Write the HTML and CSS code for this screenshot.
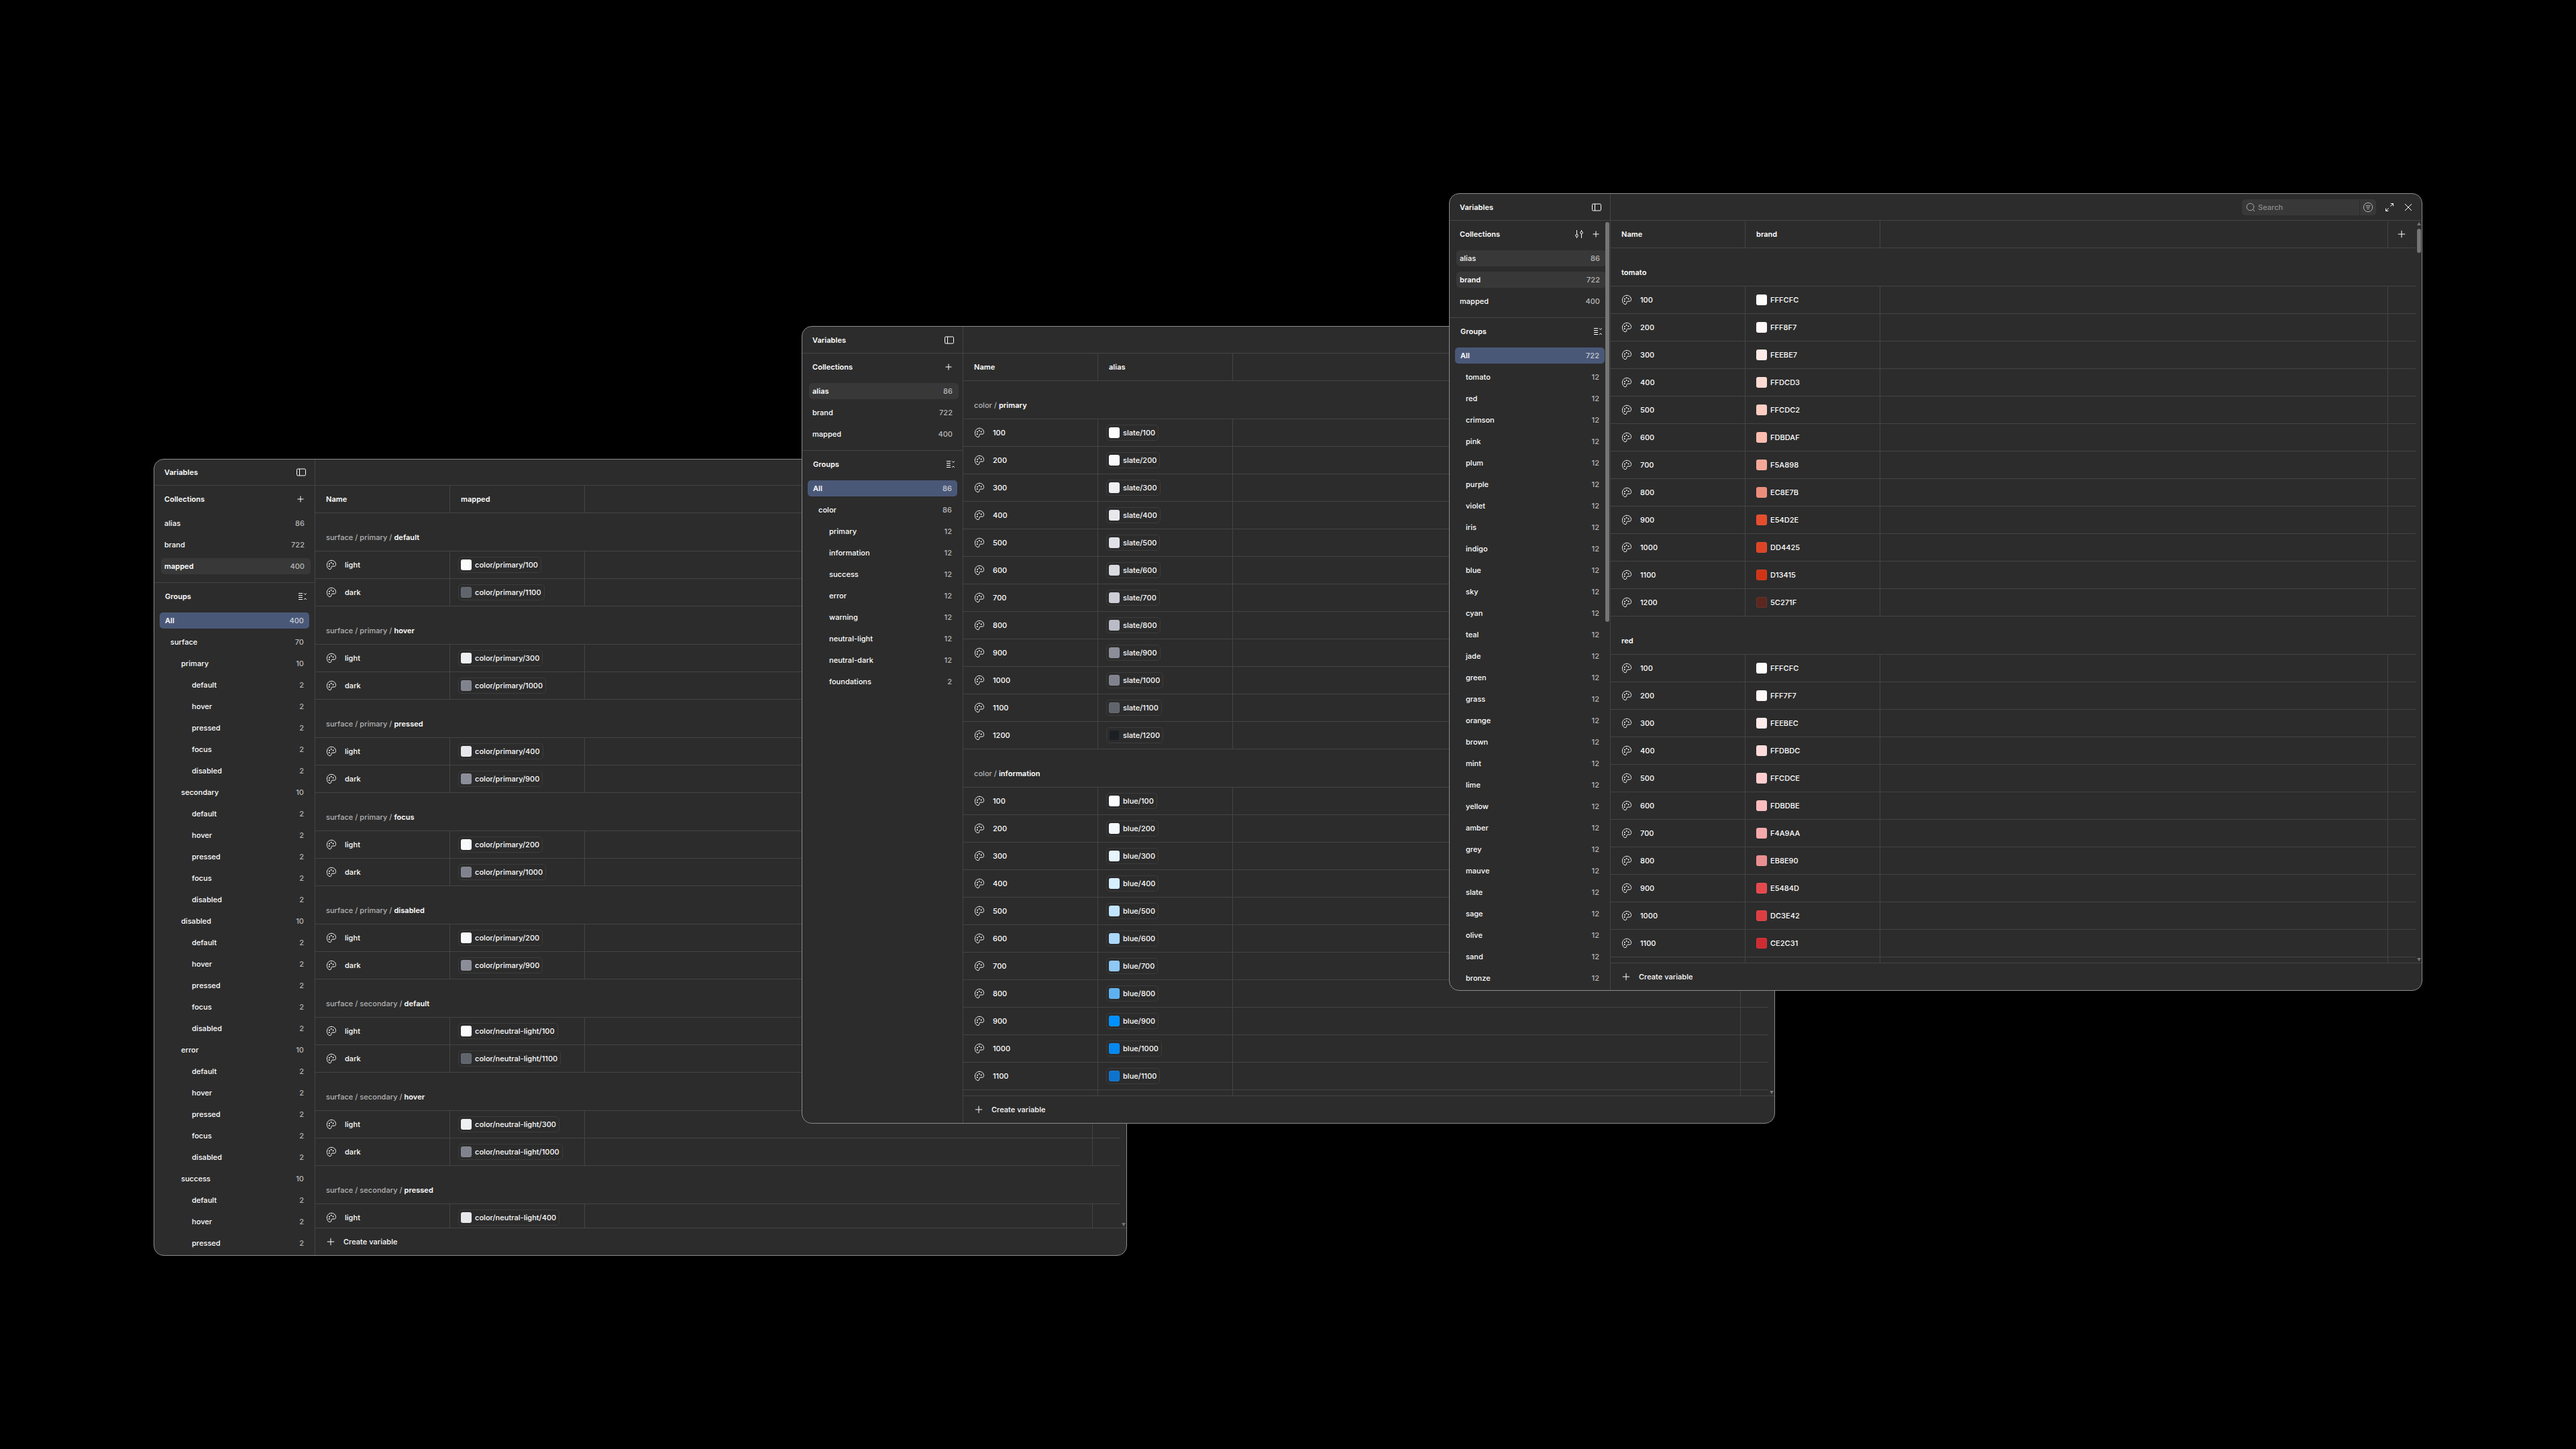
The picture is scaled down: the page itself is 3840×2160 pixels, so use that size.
FILE: index.html
```
<!DOCTYPE html>
<html lang="en">
<head>
    <meta charset="UTF-8">
    <meta name="viewport" content="width=device-width, initial-scale=1.0">
    <title>Variables</title>
    <link rel="stylesheet" href="styles.css">
</head>
<body>
    <!-- Icon set -->
    <svg class="sprite">
        <symbol id="i-panel" viewBox="0 0 16 16">
            <rect x="1.5" y="3" width="13" height="10" rx="1.5"/>
            <path d="M5.5 3v10"/>
        </symbol>
        <symbol id="i-plus" viewBox="0 0 16 16"><path d="M8 2.8v10.4M2.8 8h10.4"/></symbol>
        <symbol id="i-plus-sm" viewBox="0 0 16 16"><path d="M8 3.5v9M3.5 8h9"/></symbol>
        <symbol id="i-sort" viewBox="0 0 16 16">
            <path d="M4.5 2v6.5M4.5 12v2M11.5 2v2M11.5 7.5V14"/>
            <circle cx="4.5" cy="10.2" r="1.8"/>
            <circle cx="11.5" cy="5.8" r="1.8"/>
        </symbol>
        <symbol id="i-collapse" viewBox="0 0 16 16">
            <path d="M2 3.5h6M2 6.5h6M2 9.5h6M2 12.5h6"/>
            <path d="M10 3.5l1.9 1.9 1.9-1.9M10 12.8l1.9-1.9 1.9 1.9"/>
        </symbol>
        <symbol id="i-color" viewBox="0 0 16 16">
            <path d="M8 1.3C4.3 1.3 1.4 4.4 1.4 8.2c0 3.6 2 6.4 4.5 6.4 1.7 0 1.9-1.3 1.9-2.5 0-1.3.7-2 2-2h2.3c1.6 0 2.5-.9 2.5-2.5C14.600 4 11.700 1.300 8 1.300z"/>
            <g class="dots"><circle cx="4.7" cy="10" r="1"/><circle cx="5" cy="6.800" r="1"/><circle cx="7.700" cy="4.800" r="1"/><circle cx="10.600" cy="6.400" r="1"/></g>
        </symbol>
        <symbol id="i-search" viewBox="0 0 16 16"><circle cx="7.500" cy="7.500" r="5.300"/><path d="M11.400 11.400l2.600 2.600"/></symbol>
        <symbol id="i-filter" viewBox="0 0 16 16"><circle cx="8" cy="8" r="6.700"/><path d="M4.500 5.700h7M5.500 8h5M6.500 10.300h3"/></symbol>
        <symbol id="i-expand" viewBox="0 0 16 16"><path d="M9.700 2.500h3.800v3.800M13.200 2.800L9.300 6.700M6.300 13.500H2.500V9.700M2.800 13.200l3.900-3.900"/></symbol>
        <symbol id="i-close" viewBox="0 0 16 16"><path d="M3 3l10 10M13 3L3 13"/></symbol>
    </svg>

    <div id="mapped" class="window"></div>
    <div id="alias" class="window"></div>
    <div id="brand" class="window"></div>

    <script src="script.js"></script>
</body>
</html>
```

FILE: styles.css
```
* {
    box-sizing: border-box;
}

body {
    margin: 0;
    position: relative;
    width: 3840px;
    height: 2160px;
    overflow: hidden;
    background-color: #000;
    color: #fff;
    font-family: Inter, "Liberation Sans", sans-serif;
    font-size: 11px;
    font-weight: 550;
    line-height: 16px;
    letter-spacing: 0.04px;
}

.sprite {
    display: none;
}

.icon {
    display: block;
    flex: none;
    width: 16px;
    height: 16px;
    fill: none;
    stroke: #fff;
    stroke-width: 1;
}

.icon .dots,
.dots {
    fill: #fff;
    stroke: none;
}

/* Windows on the canvas */
.window {
    position: absolute;
    display: flex;
    width: 1451px;
    height: 1189px;
    border: 1px solid #8c8c8c;
    border-radius: 15px;
    background-color: #2c2c2c;
    overflow: hidden;
}

#mapped {
    left: 229px;
    top: 684px;
    height: 1188px;
}

#mapped .bar {
    height: 39px;
}

#alias {
    left: 1195px;
    top: 486px;
}

#brand {
    left: 2160px;
    top: 288px;
}

/* Sidebar */
.sidebar {
    position: relative;
    flex: none;
    width: 240px;
    border-right: 1px solid #444;
    overflow: hidden;
}

.bar {
    display: flex;
    align-items: center;
    justify-content: space-between;
    height: 40px;
    padding: 0 12px 0 15px;
    border-bottom: 1px solid #444;
}

.section-head {
    display: flex;
    align-items: center;
    height: 40px;
    padding: 0 13px 0 15px;
}

.section-head .title {
    flex: 1;
}

.section-head .icon + .icon {
    margin-left: 9px;
}

.title {
    font-weight: 620;
}

.collections {
    display: flex;
    flex-direction: column;
    gap: 8px;
    padding: 4px 6px 12px 10px;
    border-bottom: 1px solid #444;
}

.groups {
    display: flex;
    flex-direction: column;
    gap: 8px;
    padding: 4px 8px;
}

.groups-head {
    padding: 0 10px 0 16px;
}

.item {
    display: flex;
    flex: none;
    align-items: center;
    justify-content: space-between;
    height: 24px;
    padding: 0 8px;
    border-radius: 5px;
    color: #fff;
}

.collections .item {
    padding: 0 9px 0 5px;
}

.item .count {
    color: #b8b8b8;
    font-weight: 480;
}

.item.hover {
    background-color: #383838;
}

.item.active {
    background-color: #383838;
    font-weight: 640;
}

.groups .item.active {
    background-color: #4a5878;
}

.groups .item.active .count {
    color: #c8ccd6;
}

.groups .level-1 { padding-left: 16px; }
.groups .level-2 { padding-left: 32px; }
.groups .level-3 { padding-left: 48px; }

.thumb {
    position: absolute;
    border-radius: 3px;
    background-color: #757575;
}

.sidebar .thumb {
    top: 42px;
    right: 1px;
    width: 6px;
    height: 596px;
}

/* Table */
.main {
    position: relative;
    flex: 1;
    display: flex;
    flex-direction: column;
    min-width: 0;
}

.main .bar {
    flex: none;
    justify-content: flex-end;
    padding: 0;
}

.search {
    display: flex;
    width: 200px;
    height: 24px;
    margin-right: 12px;
    border-radius: 5px;
    background-color: #383838;
    color: #8c8c8c;
    font-size: 11px;
    font-weight: 480;
    line-height: 24px;
    overflow: hidden;
}

.search .field {
    display: flex;
    flex: 1;
    align-items: center;
    gap: 3px;
    padding-left: 5px;
    border-right: 1px solid #2c2c2c;
}

.search .filter {
    display: flex;
    align-items: center;
    padding: 0 4px;
}

.search .icon {
    stroke: #b3b3b3;
}

.main .bar > .icon {
    margin-right: 12px;
}

.table {
    flex: 1;
    min-height: 0;
    width: 1200px;
    overflow: hidden;
}

.row {
    display: grid;
    grid-template-columns: 201px 201px 1fr 41px;
    height: 41px;
    border-bottom: 1px solid #444;
}

.cell {
    display: flex;
    align-items: center;
    padding-left: 16px;
    border-right: 1px solid #444;
}

.cell:last-child {
    border-right: none;
    padding-left: 12px;
}

.row.head {
    font-weight: 620;
}

.cell .icon {
    margin-right: 12px;
}

.group-name {
    height: 57px;
    padding: 28px 16px 0;
    border-bottom: 1px solid #444;
    color: #b3b3b3;
    font-weight: 480;
    white-space: pre;
}

.group-name b {
    color: #fff;
    font-weight: 640;
}

.value {
    display: flex;
    align-items: center;
    gap: 5px;
}

.value.alias {
    height: 24px;
    margin-left: -4px;
    padding: 0 4px 0 3px;
    border: 1px solid #3c3c3c;
    border-radius: 5px;
}

.swatch {
    width: 16px;
    height: 16px;
    border: 1px solid rgba(255, 255, 255, 0.06);
    border-radius: 3px;
}

.create {
    flex: none;
    display: flex;
    align-items: center;
    gap: 11px;
    height: 41px;
    padding-left: 15px;
    border-top: 1px solid #444;
}

.main .thumb {
    top: 52px;
    right: 1px;
    width: 6px;
    height: 36px;
}

.arrow {
    position: absolute;
    right: 1px;
    border-left: 3px solid transparent;
    border-right: 3px solid transparent;
}

.arrow.up {
    top: 42px;
    border-bottom: 5px solid #757575;
}

.arrow.down {
    bottom: 43px;
    border-top: 5px solid #757575;
}
```

FILE: script.js
```
const slate = {
    100: '#FCFCFD', 200: '#F9F9FB', 300: '#F0F0F3', 400: '#E8E8EC', 500: '#E0E1E6', 600: '#D9D9E0',
    700: '#CDCED6', 800: '#B9BBC6', 900: '#8B8D98', 1000: '#80838D', 1100: '#60646C', 1200: '#1C2024'
};
const blue = ['FBFDFF', 'F4FAFF', 'E6F4FE', 'D5EFFF', 'C2E5FF', 'ACD8FC', '8EC8F6', '5EB1EF', '0090FF', '0588F0', '0D74CE'];
const tomato = ['FFFCFC', 'FFF8F7', 'FEEBE7', 'FFDCD3', 'FFCDC2', 'FDBDAF', 'F5A898', 'EC8E7B', 'E54D2E', 'DD4425', 'D13415', '5C271F'];
const red = ['FFFCFC', 'FFF7F7', 'FEEBEC', 'FFDBDC', 'FFCDCE', 'FDBDBE', 'F4A9AA', 'EB8E90', 'E5484D', 'DC3E42', 'CE2C31'];

const icon = (name) => `<svg class="icon"><use href="#i-${name}"/></svg>`;

// Row: [name, color, label, isAlias]
const hexRows = (list) => list.map((hex, i) => [(i + 1) * 100, '#' + hex, hex, false]);
const blueRows = blue.map((hex, i) => [(i + 1) * 100, '#' + hex, 'blue/' + (i + 1) * 100, true]);
const slateRows = Object.keys(slate).map((step) => [step, slate[step], 'slate/' + step, true]);
const pair = (path, light, dark) => [
    ['light', slate[light], `color/${path}/${light}`, true],
    ['dark', slate[dark], `color/${path}/${dark}`, true]
];

const states = ['default', 'hover', 'pressed', 'focus', 'disabled'];
const mappedTree = [['surface', 70, 1]];
['primary', 'secondary', 'disabled', 'error', 'success'].forEach((name) => {
    mappedTree.push([name, 10, 2]);
    states.forEach((state) => mappedTree.push([state, 2, 3]));
});

const windows = {
    mapped: {
        total: 400,
        tree: mappedTree.slice(0, 29),
        sections: [
            ['surface / primary / ', 'default', pair('primary', 100, 1100)],
            ['surface / primary / ', 'hover', pair('primary', 300, 1000)],
            ['surface / primary / ', 'pressed', pair('primary', 400, 900)],
            ['surface / primary / ', 'focus', pair('primary', 200, 1000)],
            ['surface / primary / ', 'disabled', pair('primary', 200, 900)],
            ['surface / secondary / ', 'default', pair('neutral-light', 100, 1100)],
            ['surface / secondary / ', 'hover', pair('neutral-light', 300, 1000)],
            ['surface / secondary / ', 'pressed', pair('neutral-light', 400, 900).slice(0, 1)]
        ]
    },
    alias: {
        total: 86,
        tree: [['color', 86, 1], ['primary', 12, 2], ['information', 12, 2], ['success', 12, 2], ['error', 12, 2],
            ['warning', 12, 2], ['neutral-light', 12, 2], ['neutral-dark', 12, 2], ['foundations', 2, 2]],
        sections: [
            ['color / ', 'primary', slateRows],
            ['color / ', 'information', blueRows]
        ]
    },
    brand: {
        total: 722,
        hover: 'alias',
        sort: true,
        scroll: true,
        tree: ['tomato', 'red', 'crimson', 'pink', 'plum', 'purple', 'violet', 'iris', 'indigo', 'blue', 'sky', 'cyan',
            'teal', 'jade', 'green', 'grass', 'orange', 'brown', 'mint', 'lime', 'yellow', 'amber', 'grey', 'mauve',
            'slate', 'sage', 'olive', 'sand', 'bronze'].map((name) => [name, 12, 1]),
        sections: [
            ['', 'tomato', hexRows(tomato)],
            ['', 'red', hexRows(red)]
        ]
    }
};

const item = (name, count, cls) => `<div class="item ${cls}"><span>${name}</span><span class="count">${count}</span></div>`;

const row = ([name, color, label, isAlias]) => `
    <div class="row">
        <div class="cell">${icon('color')}${name}</div>
        <div class="cell"><div class="value ${isAlias ? 'alias' : ''}"><span class="swatch" style="background-color: ${color}"></span>${label}</div></div>
        <div class="cell"></div>
        <div class="cell"></div>
    </div>`;

// Keeps the column lines running down to the footer
const emptyRow = '<div class="row"><div class="cell"></div><div class="cell"></div><div class="cell"></div><div class="cell"></div></div>';

Object.keys(windows).forEach((id) => {
    const data = windows[id];
    const collections = [['alias', 86], ['brand', 722], ['mapped', 400]].map(([name, count]) =>
        item(name, count, name === id ? 'active' : name === data.hover ? 'hover' : ''));

    document.getElementById(id).innerHTML = `
        <div class="sidebar">
            <div class="bar"><span class="title">Variables</span>${icon('panel')}</div>
            <div class="section-head"><span class="title">Collections</span>${data.sort ? icon('sort') : ''}${icon('plus-sm')}</div>
            <div class="collections">${collections.join('')}</div>
            <div class="section-head groups-head"><span class="title">Groups</span>${icon('collapse')}</div>
            <div class="groups">
                ${item('All', data.total, 'active')}
                ${data.tree.map(([name, count, level]) => item(name, count, 'level-' + level)).join('')}
            </div>
            ${data.scroll ? '<div class="thumb"></div>' : ''}
        </div>
        <div class="main">
            <div class="bar">
                ${id === 'brand' ? `<div class="search">
                    <div class="field">${icon('search')}Search</div>
                    <div class="filter">${icon('filter')}</div>
                </div>
                ${icon('expand')}${icon('close')}` : ''}
            </div>
            <div class="table">
                <div class="row head">
                    <div class="cell">Name</div>
                    <div class="cell">${id}</div>
                    <div class="cell"></div>
                    <div class="cell">${icon('plus')}</div>
                </div>
                ${data.sections.map(([path, name, rows]) => `<div class="group-name">${path}<b>${name}</b></div>${rows.map(row).join('')}`).join('')}
                ${emptyRow}
            </div>
            <div class="create">${icon('plus')}Create variable</div>
            <div class="arrow up"></div>
            <div class="thumb"></div>
            <div class="arrow down"></div>
        </div>`;
});
```
